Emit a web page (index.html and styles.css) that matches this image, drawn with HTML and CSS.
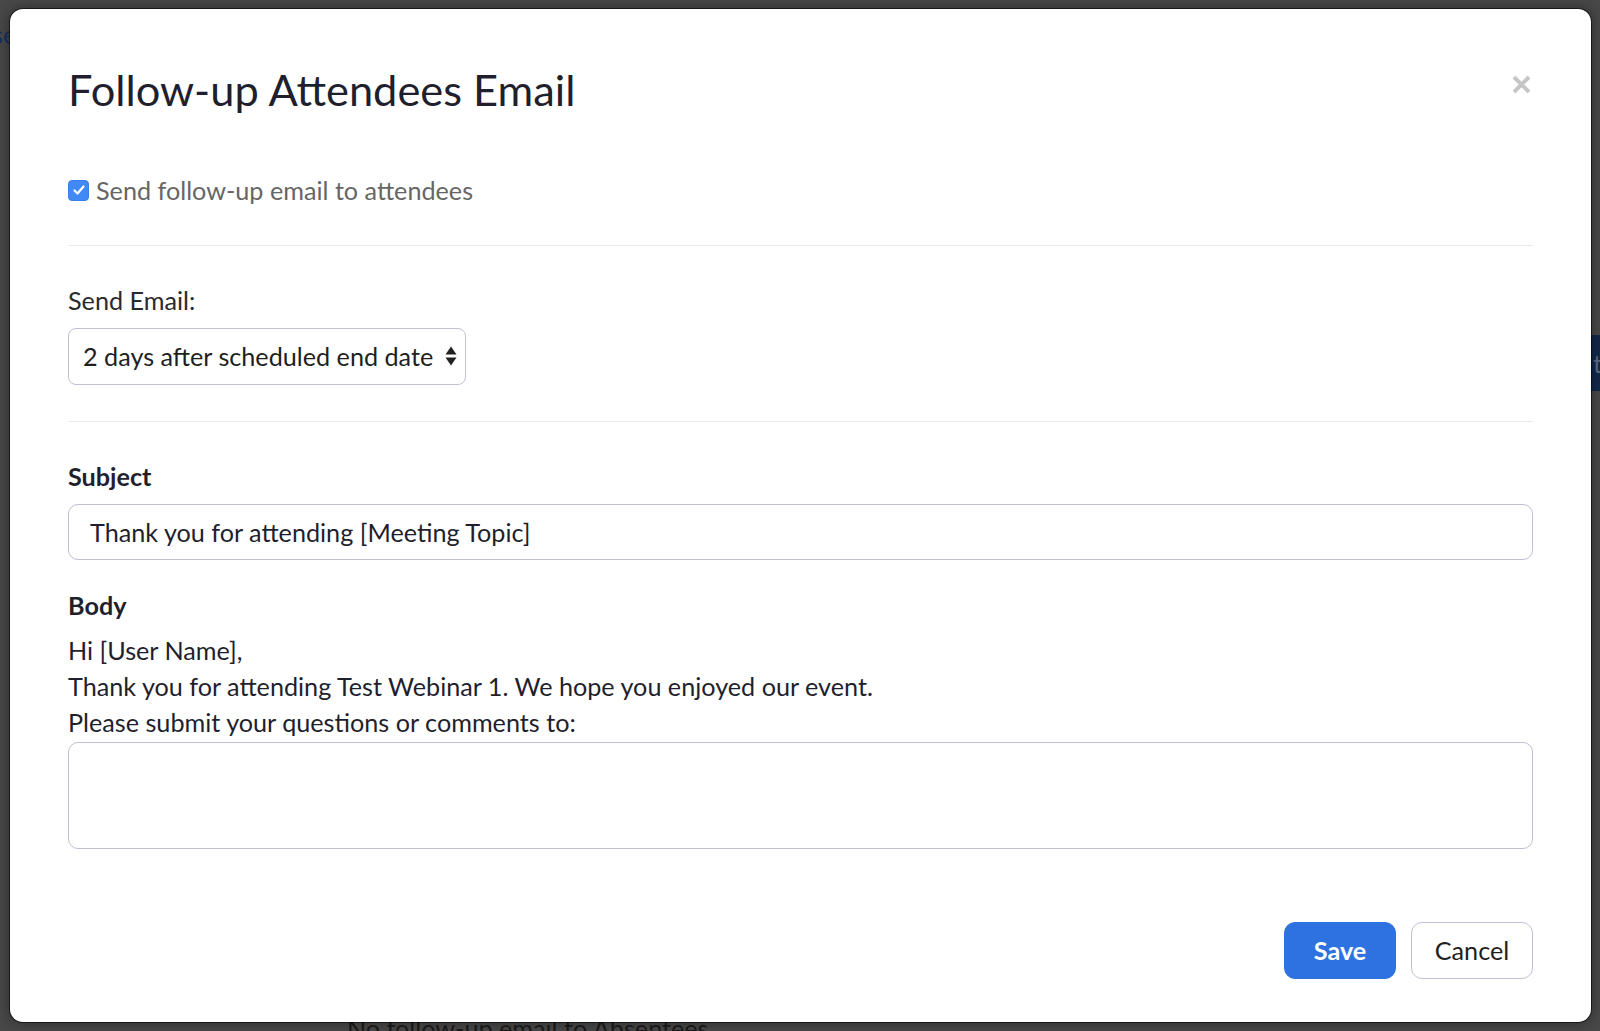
FILE: index.html
```html
<!DOCTYPE html>
<html lang="en">
<head>
<meta charset="utf-8">
<title>Follow-up Attendees Email</title>
<link rel="stylesheet" href="styles.css">
</head>
<body>
  <div class="backdrop-page">
    <span class="bg-frag bg-se">se</span>
    <span class="bg-frag bg-band">t</span>
    <span class="bg-frag bg-bottom">No follow-up email to Absentees</span>
  </div>

  <div class="modal">
    <button class="close" aria-label="Close">
      <svg width="19" height="19" viewBox="0 0 19 19"><path d="M2 2 L17 17 M17 2 L2 17" stroke="#c6c6c6" stroke-width="4" stroke-linecap="butt"/></svg>
    </button>

    <h1 class="title">Follow-up Attendees Email</h1>

    <div class="section section-check">
      <label class="check-row">
        <span class="checkbox">
          <svg width="14" height="12" viewBox="0 0 14 12"><path d="M2.5 6.5 L5.5 9.5 L11.5 2.5" fill="none" stroke="#fff" stroke-width="2.2" stroke-linecap="round" stroke-linejoin="round"/></svg>
        </span>
        <span class="check-label">Send follow-up email to attendees</span>
      </label>
    </div>

    <div class="section section-send">
      <div class="field-label">Send Email:</div>
      <div class="select">
        <span class="select-text">2 days after scheduled end date</span>
        <svg class="select-arrows" width="12" height="20" viewBox="0 0 12 20"><path d="M0.5 8.5 L6 0.5 L11.5 8.5 Z M0.5 11.5 L11.5 11.5 L6 19.5 Z" fill="#222"/></svg>
      </div>
    </div>

    <div class="section section-email">
      <div class="bold-label">Subject</div>
      <input class="text-input" type="text" value="Thank you for attending [Meeting Topic]">
      <div class="bold-label body-label">Body</div>
      <div class="body-text">
        <p>Hi [User Name],</p>
        <p>Thank you for attending Test Webinar 1. We hope you enjoyed our event.</p>
        <p>Please submit your questions or comments to:</p>
      </div>
      <textarea class="text-area"></textarea>
    </div>

    <div class="actions">
      <button class="btn btn-primary">Save</button>
      <button class="btn btn-default">Cancel</button>
    </div>
  </div>
</body>
</html>
```

FILE: styles.css
```css
* {
  box-sizing: border-box;
}

html, body {
  margin: 0;
  height: 1031px;
  overflow: hidden;
}

body {
  background: #484848;
  padding: 9px 9px 0 10px;
  font-family: "Lato", "Open Sans", sans-serif;
  color: #232333;
  position: relative;
}

.backdrop-page {
  position: absolute;
  inset: 0;
  z-index: 0;
}

.bg-frag {
  position: absolute;
  font-family: "Lato", sans-serif;
  font-size: 25.2px;
  line-height: 1;
}

.bg-se {
  left: -8px;
  top: 22px;
  color: #16305c;
}

.bg-band {
  left: 1591px;
  top: 335px;
  width: 20px;
  height: 56px;
  background: #12284b;
  color: #5c6a82;
  padding: 16px 0 0 2px;
}

.bg-bottom {
  left: 347px;
  top: 1016px;
  color: #1b1b1b;
}

.modal {
  position: relative;
  z-index: 1;
  width: 1581px;
  height: 1013px;
  background: #fff;
  border-radius: 13px;
  box-shadow: 0 0 0 1px rgba(0, 0, 0, 0.55), 0 0 14px rgba(0, 0, 0, 0.45);
  padding: 55px 58px 0 58px;
  display: flex;
  flex-direction: column;
}

.close {
  position: absolute;
  top: 66px;
  right: 60px;
  width: 19px;
  height: 19px;
  padding: 0;
  border: 0;
  background: none;
  display: flex;
}

.title {
  margin: 0;
  font-size: 43.4px;
  line-height: 50px;
  font-weight: 400;
  color: #1f1f2d;
}

.section {
  border-bottom: 1px solid #e9e9ec;
}

.section-check {
  margin-top: 57.5px;
  padding-bottom: 37.5px;
}

.check-row {
  display: flex;
  align-items: center;
  gap: 7px;
  height: 36px;
}

.checkbox {
  width: 21px;
  height: 21px;
  border-radius: 4px;
  background: #4189f5;
  border: 1px solid #3a7fe8;
  display: flex;
  align-items: center;
  justify-content: center;
  margin-top: 1px;
}

.check-label {
  font-size: 25.2px;
  line-height: 36px;
  color: #666;
}

.section-send {
  padding-top: 35.5px;
  padding-bottom: 36.5px;
}

.field-label {
  font-size: 25.2px;
  line-height: 36px;
  color: #2a2a2a;
}

.select {
  margin-top: 10px;
  width: 398px;
  height: 57px;
  border: 1.5px solid #c1c1d3;
  border-radius: 8px;
  padding: 0 8px 0 14px;
  display: flex;
  align-items: center;
  justify-content: space-between;
}

.select-text {
  font-size: 25.2px;
  color: #1f1f1f;
}

.section-email {
  border-bottom: 0;
  padding-top: 36px;
  display: flex;
  flex-direction: column;
}

.bold-label {
  font-size: 25.2px;
  line-height: 36px;
  font-weight: 700;
  color: #1f1f2d;
}

.text-input {
  margin-top: 9.5px;
  width: 100%;
  height: 56px;
  border: 1.5px solid #bfbfd2;
  border-radius: 10px;
  padding: 0 21px;
  font-family: "Lato", sans-serif;
  font-size: 25.2px;
  color: #1f1f2d;
  background: #fff;
  outline: none;
}

.body-label {
  margin-top: 27.5px;
}

.body-text {
  margin-top: 8.5px;
}

.body-text p {
  margin: 0;
  font-size: 25.2px;
  line-height: 36px;
  color: #1f1f2d;
}

.text-area {
  margin-top: 2px;
  width: 100%;
  height: 107px;
  border: 1.5px solid #bfbfd2;
  border-radius: 10px;
  resize: none;
  font-family: "Lato", sans-serif;
  font-size: 25.2px;
  padding: 10px 20px;
  outline: none;
}

.actions {
  margin-top: 73px;
  display: flex;
  justify-content: flex-end;
  gap: 15px;
}

.btn {
  height: 57px;
  border-radius: 11px;
  font-family: "Lato", sans-serif;
  font-size: 25.2px;
  padding: 0;
  display: flex;
  align-items: center;
  justify-content: center;
}

.btn-primary {
  width: 112px;
  background: #2d72e0;
  border: 1px solid #2d72e0;
  color: #fff;
  font-weight: 700;
}

.btn-default {
  width: 122px;
  background: #fff;
  border: 1.5px solid #c1c1d5;
  color: #1f1f1f;
}
```
